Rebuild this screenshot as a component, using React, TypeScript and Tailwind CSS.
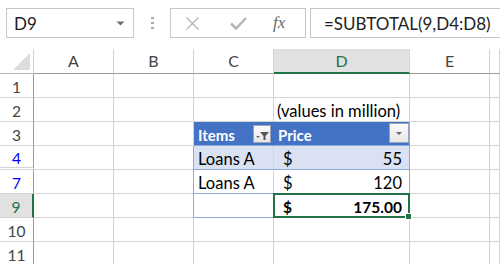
import React from 'react'

const font = { fontFamily: 'Lato, "Open Sans", sans-serif' }

const cols = ['A', 'B', 'C', 'D', 'E', '']

type Row = {
  n: string
  kind?: 'filtered' | 'active'
  hidden?: boolean
}

const rows: Row[] = [
  { n: '1' },
  { n: '2' },
  { n: '3' },
  { n: '4', kind: 'filtered', hidden: true },
  { n: '7', kind: 'filtered' },
  { n: '9', kind: 'active' },
  { n: '10' },
  { n: '11' },
]

function FilterButton({ active }: { active?: boolean }) {
  return (
    <div className="w-[18px] h-[18px] border border-[#9aa6b8] bg-gradient-to-b from-[#fbfbfb] to-[#e6e6e6] flex items-center justify-center">
      {active ? (
        <svg width="16" height="16" viewBox="0 0 16 16">
          <path d="M6 6h9l-3.5 4v4h-2v-4z" fill="#555" />
          <path d="M2 10h4l-2 2z" fill="#666" />
        </svg>
      ) : (
        <svg width="16" height="16" viewBox="0 0 16 16">
          <path d="M5 7h6l-3 3z" fill="#666" />
        </svg>
      )}
    </div>
  )
}

function Cell({ r, c }: { r: Row; c: number }) {
  const base = 'h-[24px] border-r border-b border-[#d4d4d4] flex items-end text-[16.5px] leading-[18px] pb-[1px] text-black'
  // C column (c=2), D column (c=3)
  if (r.n === '2' && c === 3) {
    return (
      <div className={`${base} pl-[3px] whitespace-nowrap`}>(values in million)</div>
    )
  }
  if (r.n === '3' && c === 2) {
    return (
      <div className="h-[24px] bg-[#4472c4] border-b border-[#8ea9db] flex items-center pl-[4px] pr-[3px] text-white font-bold text-[15px]">
        <span className="pt-[3px]">Items</span>
        <div className="ml-auto mt-[1px]">
          <FilterButton active />
        </div>
      </div>
    )
  }
  if (r.n === '3' && c === 3) {
    return (
      <div className="h-[24px] bg-[#4472c4] border-r border-b border-[#8ea9db] flex items-center pl-[4px] text-white font-bold text-[15px]">
        <span className="pt-[3px]">Price</span>
        <div className="ml-auto mt-[-1px]">
          <div className="w-[20px] h-[20px] border border-[#9aa6b8] bg-gradient-to-b from-[#fbfbfb] to-[#e6e6e6] flex items-center justify-center">
            <svg width="16" height="16" viewBox="0 0 16 16">
              <path d="M5 7h6l-3 3z" fill="#666" />
            </svg>
          </div>
        </div>
      </div>
    )
  }
  if ((r.n === '4' || r.n === '7' || r.n === '9') && c === 2) {
    const bg = r.n === '4' ? 'bg-[#d9e1f2]' : 'bg-white'
    return (
      <div className={`h-[24px] ${bg} border-r border-r-[#d4d4d4] border-b border-b-[#8ea9db] border-l border-l-[#8ea9db] -ml-px flex items-end pl-[4px] pb-[1px] text-[16.5px] leading-[18px] text-black`}>
        {r.n === '9' ? '' : 'Loans A'}
      </div>
    )
  }
  if ((r.n === '4' || r.n === '7') && c === 3) {
    const bg = r.n === '4' ? 'bg-[#d9e1f2]' : 'bg-white'
    return (
      <div className={`h-[24px] ${bg} border-r border-b border-[#8ea9db] flex items-end pl-[9px] pr-[7px] pb-[1px] text-[16.5px] leading-[18px] text-black`}>
        <span>$</span>
        <span className="ml-auto">{r.n === '4' ? '55' : '120'}</span>
      </div>
    )
  }
  if (r.n === '9' && c === 3) {
    return (
      <div className="relative h-[24px] bg-white border-r border-b border-[#8ea9db] flex items-end pl-[9px] pr-[7px] pb-[1px] text-[15.5px] leading-[18px] font-bold text-black">
        <span>$</span>
        <span className="ml-auto">175.00</span>
        <div className="absolute -left-px -top-px -right-px -bottom-px border-2 border-[#217346]" />
        <div className="absolute -right-[3px] -bottom-[3px] w-[5px] h-[5px] bg-[#217346] border border-white box-content" />
      </div>
    )
  }
  return <div className={base} />
}

export default function App() {
  return (
    <div className="w-[500px] h-[264px] overflow-hidden bg-white select-none" style={font}>
      {/* formula bar */}
      <div className="h-[49px] flex items-start pt-[8px] pl-[6px] text-[#222]">
        <div className="w-[128px] h-[30px] border border-[#c6c6c6] flex items-center pl-[7px] pr-[8px] text-[17px]">
          <span className="pt-[1px]">D9</span>
          <svg className="ml-auto" width="9" height="5" viewBox="0 0 9 5">
            <path d="M0.5 0.5h8l-4 4z" fill="#6f6f6f" />
          </svg>
        </div>
        <div className="w-[36px] h-[30px] flex flex-col items-center justify-center gap-[3px]">
          <div className="w-[3px] h-[2px] bg-[#a8a8a8]" />
          <div className="w-[3px] h-[2px] bg-[#a8a8a8]" />
          <div className="w-[3px] h-[2px] bg-[#a8a8a8]" />
        </div>
        <div className="w-[136px] h-[30px] border border-[#c6c6c6] flex items-center">
          <svg className="ml-[14px]" width="15" height="15" viewBox="0 0 15 15">
            <path d="M1.5 1.5l12 12M13.5 1.5l-12 12" stroke="#b4b4b4" strokeWidth="1.3" />
          </svg>
          <svg className="ml-[30px]" width="17" height="14" viewBox="0 0 17 14">
            <path d="M1 7.5l5 5L16 2" stroke="#b4b4b4" strokeWidth="2.5" fill="none" />
          </svg>
          <span
            className="ml-[26px] text-[17px] italic text-[#6a6a6a]"
            style={{ fontFamily: '"Liberation Serif", serif' }}
          >
            fx
          </span>
        </div>
        <div className="flex-1 ml-[4px] h-[30px] border border-r-0 border-[#c6c6c6] flex items-center pl-[13px] text-[17px] whitespace-nowrap">
          <span className="pt-[1px]">=SUBTOTAL(9,D4:D8)</span>
        </div>
      </div>

      {/* sheet grid */}
      <div className="grid grid-cols-[34px_80px_80px_80px_136px_80px_1fr]">
        {/* corner */}
        <div className="h-[25px] border-r border-b border-r-[#d4d4d4] border-b-[#b8b8b8] flex items-end justify-end pr-[3px] pb-[3px]">
          <svg width="17" height="17" viewBox="0 0 17 17">
            <path d="M17 0v17H0z" fill="#dcdcdc" />
          </svg>
        </div>
        {cols.map((c) =>
          c === 'D' ? (
            <div
              key={c}
              className="h-[25px] bg-[#e1e1e1] border-r border-r-[#d4d4d4] border-b-2 border-b-[#217346] flex items-end justify-center pb-[2px] text-[16px] leading-[18px] text-[#217346]"
            >
              {c}
            </div>
          ) : (
            <div
              key={c || 'x'}
              className="h-[25px] border-r border-r-[#d4d4d4] border-b border-b-[#9b9b9b] flex items-end justify-center pb-[3px] text-[16px] leading-[18px] text-[#444]"
            >
              {c}
            </div>
          )
        )}

        {rows.map((r) => (
          <React.Fragment key={r.n}>
            {r.kind === 'active' ? (
              <div className="h-[24px] bg-[#e1e1e1] border-r-2 border-r-[#217346] border-b border-b-[#d4d4d4] flex items-end justify-center pb-[1px] text-[15.5px] leading-[18px] text-[#217346]">
                {r.n}
              </div>
            ) : (
              <div
                className={`h-[24px] border-r border-r-[#9b9b9b] ${
                  r.hidden ? 'border-b-[3px] border-double' : 'border-b'
                } border-b-[#d4d4d4] flex items-end justify-center ${
                  r.hidden ? 'pb-0' : 'pb-[1px]'
                } text-[15.5px] leading-[18px] ${r.kind === 'filtered' ? 'text-[#0000ff]' : 'text-[#444]'}`}
              >
                {r.n}
              </div>
            )}
            {cols.map((_, i) => (
              <Cell key={i} r={r} c={i} />
            ))}
          </React.Fragment>
        ))}
      </div>
    </div>
  )
}
